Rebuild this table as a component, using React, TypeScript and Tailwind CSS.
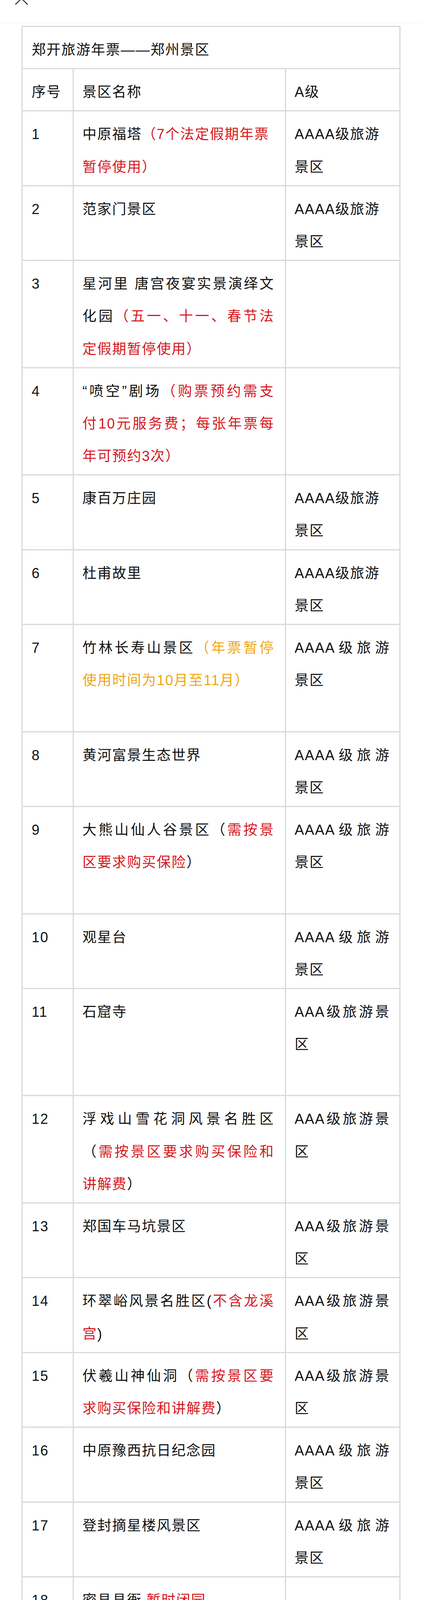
type Row = {
  n: string;
  name: string[];
  level?: string[];
  lj?: boolean;
};

const AAAA = ["AAAA级旅游", "景区"];
const AAA = ["AAA级旅游景", "区"];

// *red*  %gold%  trailing ^ = line not justified
const ROWS: Row[] = [
  { n: "1", name: ["中原福塔*（7个法定假期年票*^", "*暂停使用）*"], level: AAAA },
  { n: "2", name: ["范家门景区"], level: AAAA },
  { n: "3", name: ["星河里 唐宫夜宴实景演绎文", "化园*（五一、十一、春节法*", "*定假期暂停使用）*"] },
  { n: "4", name: ["“喷空”剧场*（购票预约需支*", "*付10元服务费；每张年票每*", "*年可预约3次）*"] },
  { n: "5", name: ["康百万庄园"], level: AAAA },
  { n: "6", name: ["杜甫故里"], level: AAAA },
  { n: "7", name: ["竹林长寿山景区%（年票暂停%", "%使用时间为10月至11月）%", ""], level: AAAA, lj: true },
  { n: "8", name: ["黄河富景生态世界"], level: AAAA, lj: true },
  { n: "9", name: ["大熊山仙人谷景区（*需按景*", "*区要求购买保险*）", ""], level: AAAA, lj: true },
  { n: "10", name: ["观星台"], level: AAAA, lj: true },
  { n: "11", name: ["石窟寺", "", ""], level: AAA, lj: true },
  { n: "12", name: ["浮戏山雪花洞风景名胜区", "（*需按景区要求购买保险和*", "*讲解费*）"], level: AAA, lj: true },
  { n: "13", name: ["郑国车马坑景区"], level: AAA, lj: true },
  { n: "14", name: ["环翠峪风景名胜区(*不含龙溪*", "*宫*)"], level: AAA, lj: true },
  { n: "15", name: ["伏羲山神仙洞（*需按景区要*", "*求购买保险和讲解费*）"], level: AAA, lj: true },
  { n: "16", name: ["中原豫西抗日纪念园"], level: AAAA, lj: true },
  { n: "17", name: ["登封摘星楼风景区"], level: AAAA, lj: true },
  { n: "18", name: ["密县县衙 *暂时闭园*"] },
  { n: "19", name: ["打虎亭汉墓"], level: AAA, lj: true },
  { n: "20", name: ["会善寺"] },
  { n: "21", name: ["豫西抗日根据地纪念馆"], level: AAA, lj: true },
  { n: "22", name: ["嵩山启母阙景区"] },
  { n: "23", name: ["嵩山少室阙景区", ""] },
  { n: "24", name: ["浮戏山杨树沟风景区（*因路*", "*况问题暂时闭园*）"] },
  { n: "25", name: ["中封山景区"], level: AAA, lj: true },
  { n: "26", name: ["青龙山慈云寺"], level: AAAA, lj: true },
  {
    n: "27",
    name: [
      "只有河南 戏剧幻城*（持有效*",
      "*旅游年票客户购首道门票，*",
      "*一日全价票享门市价基础上*",
      "*立减45元优惠次数1次）每年*",
      "*9、11、12、3月可以使用*",
      "*（期间中秋、12月31日、元*",
      "*旦、春节法定假期年票暂停*",
      "*使用）；*",
    ],
    level: AAAA,
    lj: true,
  },
  {
    n: "28",
    name: [
      "建业电影小镇*（持有效旅游*",
      "*年票客户每年可享受景区当*",
      "*日优惠价格购票次数1次）7*",
      "*个法定假期、12月31日年票*",
      "*暂停使用*",
    ],
    level: AAAA,
    lj: true,
  },
  {
    n: "29",
    name: [
      "郑州方特欢乐世界*（持有效*",
      "*旅游年票客户每年可使用优*",
      "*惠后价为240元次数为1次）*^",
      "*7个法定假期年票暂停使用*",
    ],
    level: AAAA,
    lj: true,
  },
  {
    n: "30",
    name: [
      "郑州方特梦幻王国*（持有效*",
      "*旅游年票客户每年可使用优*",
      "*惠后价为240元次数为1次）*^",
      "*7个法定假期年票暂停使用*",
    ],
    level: AAAA,
    lj: true,
  },
  {
    n: "31",
    name: ["郑州海昌海洋公园*（持有效*", "*旅游年票客户每年可使用优*", "*惠后价为240元次数为1次）*"],
    level: AAAA,
    lj: true,
  },
];

function Line({ text, justify }: { text: string; justify: boolean }) {
  const noJ = text.endsWith("^");
  const t = noJ ? text.slice(0, -1) : text;
  const parts = t.split(/(\*[^*]*\*|%[^%]*%)/).filter(Boolean);
  return (
    <div
      className={
        justify && !noJ
          ? "h-[83.2px] whitespace-nowrap [text-align-last:justify]"
          : "h-[83.2px] whitespace-nowrap"
      }
    >
      {t === ""
        ? "\u00a0"
        : parts.map((p, i) =>
            p.startsWith("*") ? (
              <span key={i} className="text-[#d5181e]">
                {p.slice(1, -1)}
              </span>
            ) : p.startsWith("%") ? (
              <span key={i} className="text-[#efa614]">
                {p.slice(1, -1)}
              </span>
            ) : (
              <span key={i}>{p}</span>
            )
          )}
    </div>
  );
}

function Lines({ lines, justify }: { lines: string[]; justify: boolean }) {
  let last = -1;
  lines.forEach((l, i) => {
    if (l !== "") last = i;
  });
  return (
    <>
      {lines.map((l, i) => (
        <Line key={i} text={l} justify={justify && i < last} />
      ))}
    </>
  );
}

function TableRow({ row }: { row: Row }) {
  return (
    <div className="grid grid-cols-[131px_543px_290px] border-b-[3px] border-[#d9d9d9]">
      <div className="border-r-[3px] border-[#d9d9d9] pl-[23px] pt-[17px] pb-[5px]">
        <Line text={row.n} justify={false} />
      </div>
      <div className="border-r-[3px] border-[#d9d9d9] pl-[22px] pr-[27px] pt-[17px] pb-[5px]">
        <Lines lines={row.name} justify={true} />
      </div>
      <div className="pl-[22px] pr-[24px] pt-[17px] pb-[5px]">
        {row.level ? <Lines lines={row.level} justify={!!row.lj} /> : null}
      </div>
    </div>
  );
}

export default function App() {
  return (
    <div className="h-[7654px] w-[1080px] overflow-hidden bg-white font-['Liberation_Sans','Noto_Sans_CJK_SC',sans-serif] text-[36px] leading-[83.2px] tracking-[2px] text-[#111]">
      {/* top bar with close button */}
      <div className="relative h-[59px] border-b border-[#eeeeee]">
        <svg className="absolute left-[35px] top-0" width="40" height="14" viewBox="0 0 40 14">
          <path d="M2 -22 L35 11 M38 -22 L5 11" stroke="#333" strokeWidth="2.5" strokeLinecap="round" fill="none" />
        </svg>
      </div>

      <div className="ml-[55px] mt-[7px] w-[970px] border-x-[3px] border-t-[3px] border-[#d9d9d9]">
        <div className="border-b-[3px] border-[#d9d9d9] pl-[23px] pt-[17px] pb-[5px]">
          <Line text="郑开旅游年票——郑州景区" justify={false} />
        </div>
        <div className="grid grid-cols-[131px_543px_290px] border-b-[3px] border-[#d9d9d9]">
          <div className="border-r-[3px] border-[#d9d9d9] pl-[23px] pt-[17px] pb-[5px]">
            <Line text="序号" justify={false} />
          </div>
          <div className="border-r-[3px] border-[#d9d9d9] pl-[22px] pt-[17px] pb-[5px]">
            <Line text="景区名称" justify={false} />
          </div>
          <div className="pl-[22px] pt-[17px] pb-[5px]">
            <Line text="A级" justify={false} />
          </div>
        </div>
        {ROWS.map((r) => (
          <TableRow key={r.n} row={r} />
        ))}
      </div>
    </div>
  );
}
